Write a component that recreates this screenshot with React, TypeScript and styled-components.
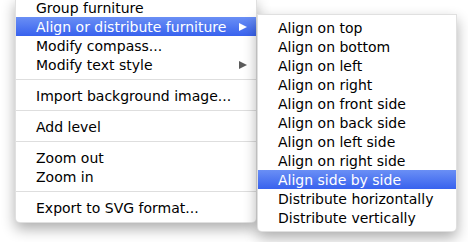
import React from "react";
import styled, {createGlobalStyle} from "styled-components";

const GlobalStyle = createGlobalStyle`
    html, body {
        margin: 0;
        padding: 0;
        background: #ffffff;
        overflow: hidden;
    }
`;

type Entry = { label: string; submenu?: boolean; active?: boolean } | "separator";

const mainEntries: Entry[] = [
    {label: "Group furniture"},
    {label: "Align or distribute furniture", submenu: true, active: true},
    {label: "Modify compass..."},
    {label: "Modify text style", submenu: true},
    "separator",
    {label: "Import background image..."},
    "separator",
    {label: "Add level"},
    "separator",
    {label: "Zoom out"},
    {label: "Zoom in"},
    "separator",
    {label: "Export to SVG format..."},
];

const alignEntries: Entry[] = [
    {label: "Align on top"},
    {label: "Align on bottom"},
    {label: "Align on left"},
    {label: "Align on right"},
    {label: "Align on front side"},
    {label: "Align on back side"},
    {label: "Align on left side"},
    {label: "Align on right side"},
    {label: "Align side by side", active: true},
    {label: "Distribute horizontally"},
    {label: "Distribute vertically"},
];

function MenuItems(props: { entries: Entry[] }) {
    return (
        <>
            {props.entries.map((e, i) =>
                e === "separator"
                    ? <Separator key={i}/>
                    : <Item key={i} $active={!!e.active}>
                        <span>{e.label}</span>
                        {e.submenu && <Arrow $active={!!e.active}/>}
                    </Item>
            )}
        </>
    );
}

export default function App() {
    return (
        <Stage>
            <GlobalStyle/>
            <MainMenu>
                <MenuItems entries={mainEntries}/>
            </MainMenu>
            <SubMenu>
                <MenuItems entries={alignEntries}/>
            </SubMenu>
        </Stage>
    );
}

/**
 * Styled Components
 */
const Stage = styled("div")`
    display: flex;
    flex-direction: row;
    align-items: flex-start;
    width: 468px;
    height: 242px;
    padding-left: 15px;
    box-sizing: border-box;
    font-family: "DejaVu Sans", "Liberation Sans", sans-serif;
    font-size: 14px;
    color: #000;
`;

const Menu = styled("div")`
    display: flex;
    flex-direction: column;
    background: #ffffff;
    box-sizing: border-box;
    border: 1px solid rgba(0, 0, 0, 0.12);
    box-shadow: 0 6px 14px rgba(0, 0, 0, 0.32);
`;

const MainMenu = styled(Menu)`
    width: 242px;
    margin-top: -2px;
    padding-bottom: 5px;
    border-top: none;
    border-radius: 0 0 5px 5px;
`;

const SubMenu = styled(Menu)`
    width: 200px;
    margin-top: 14px;
    padding: 3px 0 4px;
    border-radius: 0 0 5px 5px;
    position: relative;
`;

const Item = styled("div")<{ $active: boolean }>`
    display: flex;
    flex-direction: row;
    align-items: center;
    justify-content: space-between;
    height: 19px;
    padding: 0 9px 0 20px;
    white-space: nowrap;
    color: ${p => p.$active ? "#ffffff" : "#000000"};
    background: ${p => p.$active ? "linear-gradient(#6a8ff5, #3862ee)" : "transparent"};
`;

const Arrow = styled("span")<{ $active: boolean }>`
    width: 0;
    height: 0;
    border-top: 4.5px solid transparent;
    border-bottom: 4.5px solid transparent;
    border-left: 8px solid ${p => p.$active ? "#ffffff" : "#5a5a5a"};
`;

const Separator = styled("div")`
    height: 1px;
    margin: 5px 0 6px;
    background: #dedede;
`;
